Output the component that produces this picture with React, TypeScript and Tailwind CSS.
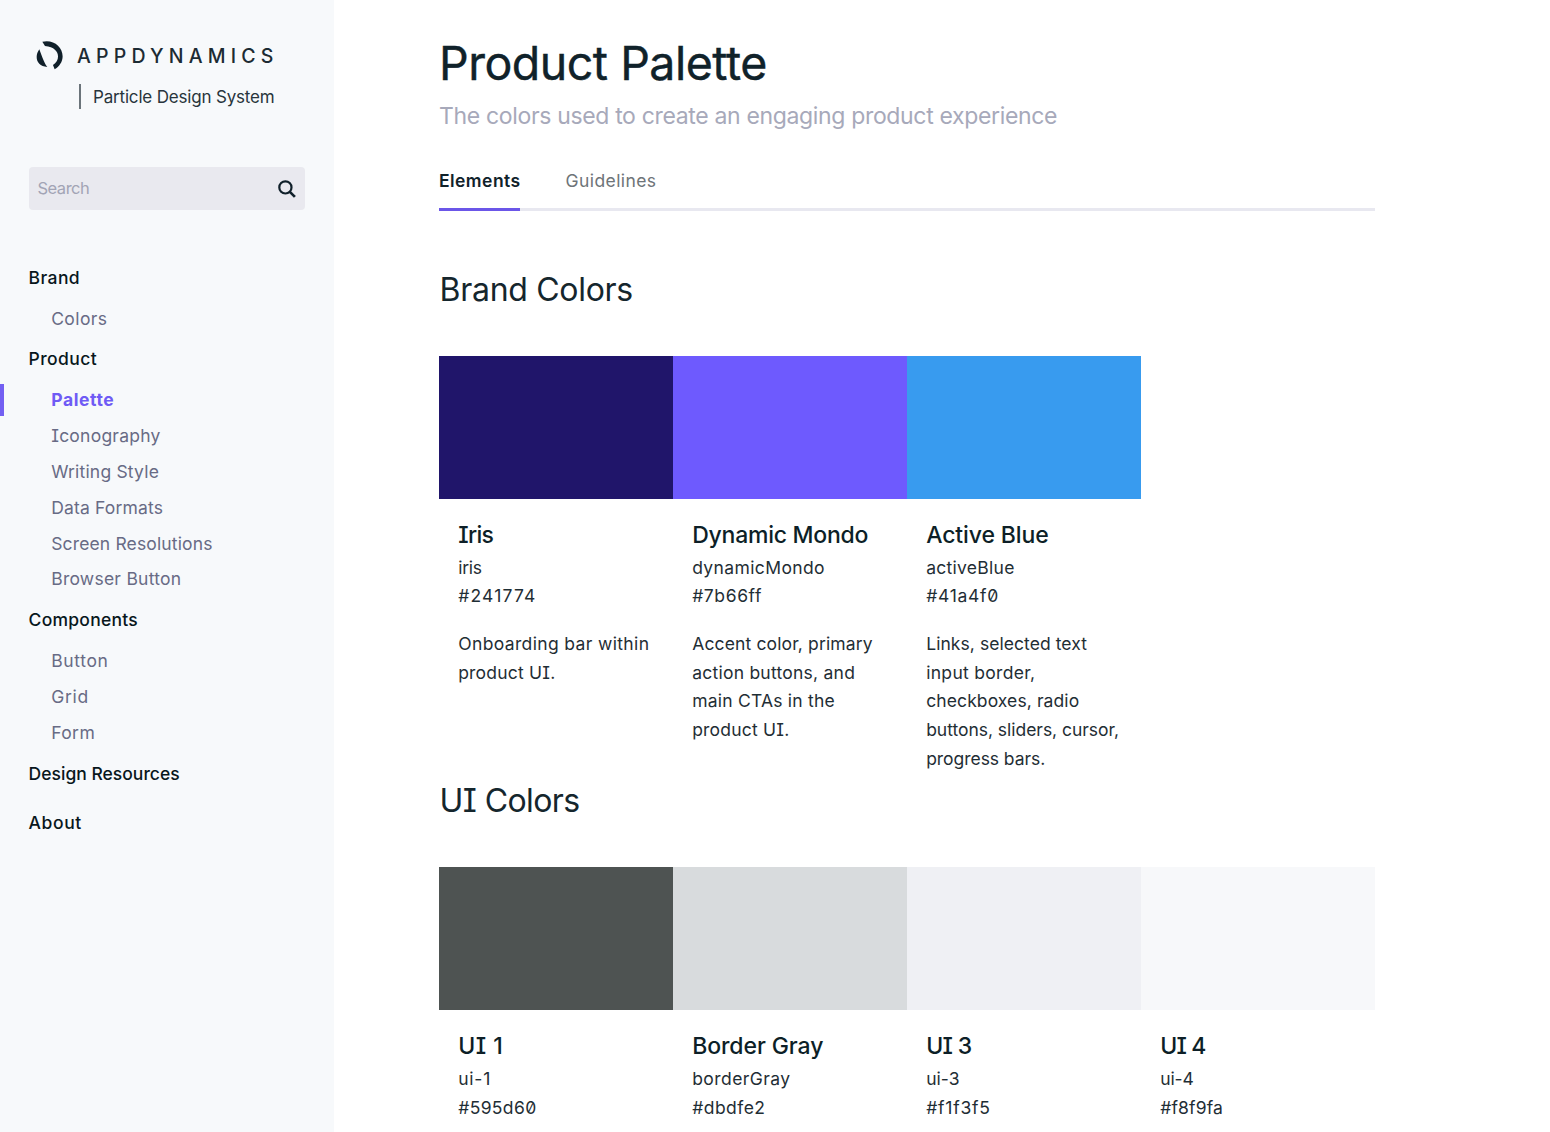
type NavLink = { label: string; tracking: string; active?: boolean };
type NavGroup = { label: string; tracking: string; links: NavLink[] };

const nav: NavGroup[] = [
  {
    label: "Brand",
    tracking: "tracking-[0.4px]",
    links: [{ label: "Colors", tracking: "tracking-[0.4px]" }],
  },
  {
    label: "Product",
    tracking: "tracking-[0.4px]",
    links: [
      { label: "Palette", tracking: "tracking-[0.6px]", active: true },
      { label: "Iconography", tracking: "tracking-[0.23px]" },
      { label: "Writing Style", tracking: "tracking-[0.19px]" },
      { label: "Data Formats", tracking: "tracking-[0.16px]" },
      { label: "Screen Resolutions", tracking: "tracking-[0.15px]" },
      { label: "Browser Button", tracking: "tracking-[0.25px]" },
    ],
  },
  {
    label: "Components",
    tracking: "tracking-[0.25px]",
    links: [
      { label: "Button", tracking: "tracking-[0.65px]" },
      { label: "Grid", tracking: "tracking-[0.7px]" },
      { label: "Form", tracking: "tracking-[0.4px]" },
    ],
  },
  { label: "Design Resources", tracking: "tracking-[0.01px]", links: [] },
  { label: "About", tracking: "tracking-[0.6px]", links: [] },
];

type Swatch = {
  name: string;
  nameTracking: string;
  token: string;
  tokenTracking: string;
  hex: string;
  hexTracking: string;
  fill: string;
  lines?: { text: string; tracking: string }[];
};

const brandColors: Swatch[] = [
  {
    name: "Iris",
    nameTracking: "tracking-[-0.7px]",
    token: "iris",
    tokenTracking: "tracking-[-0.3px]",
    hex: "#241774",
    hexTracking: "tracking-[1.2px]",
    fill: "bg-[#20156a]",
    lines: [
      { text: "Onboarding bar within", tracking: "tracking-[0.36px]" },
      { text: "product UI.", tracking: "tracking-[0.2px]" },
    ],
  },
  {
    name: "Dynamic Mondo",
    nameTracking: "tracking-[-0.24px]",
    token: "dynamicMondo",
    tokenTracking: "tracking-[0.38px]",
    hex: "#7b66ff",
    hexTracking: "tracking-[0.6px]",
    fill: "bg-[#6e5afe]",
    lines: [
      { text: "Accent color, primary", tracking: "tracking-[0.14px]" },
      { text: "action buttons, and", tracking: "tracking-[0.24px]" },
      { text: "main CTAs in the", tracking: "tracking-[0.22px]" },
      { text: "product UI.", tracking: "tracking-[0.2px]" },
    ],
  },
  {
    name: "Active Blue",
    nameTracking: "tracking-[-0.12px]",
    token: "activeBlue",
    tokenTracking: "tracking-[0.27px]",
    hex: "#41a4f0",
    hexTracking: "tracking-[0.7px]",
    fill: "bg-[#389bef]",
    lines: [
      { text: "Links, selected text", tracking: "tracking-[0.06px]" },
      { text: "input border,", tracking: "tracking-[0.3px]" },
      { text: "checkboxes, radio", tracking: "tracking-[0.1px]" },
      { text: "buttons, sliders, cursor,", tracking: "tracking-[-0.03px]" },
      { text: "progress bars.", tracking: "tracking-[-0.05px]" },
    ],
  },
];

const uiColors: Swatch[] = [
  {
    name: "UI 1",
    nameTracking: "tracking-[0.5px]",
    token: "ui-1",
    tokenTracking: "tracking-[0.8px]",
    hex: "#595d60",
    hexTracking: "tracking-[0.36px]",
    fill: "bg-[#4e5352]",
  },
  {
    name: "Border Gray",
    nameTracking: "tracking-[-0.09px]",
    token: "borderGray",
    tokenTracking: "tracking-[0.44px]",
    hex: "#dbdfe2",
    hexTracking: "tracking-[0.45px]",
    fill: "bg-[#d8dbdd]",
  },
  {
    name: "UI 3",
    nameTracking: "tracking-[-0.7px]",
    token: "ui-3",
    tokenTracking: "tracking-[0px]",
    hex: "#f1f3f5",
    hexTracking: "tracking-[0.78px]",
    fill: "bg-[#eff0f4]",
  },
  {
    name: "UI 4",
    nameTracking: "tracking-[-0.8px]",
    token: "ui-4",
    tokenTracking: "tracking-[-0.1px]",
    hex: "#f8f9fa",
    hexTracking: "tracking-[0.16px]",
    fill: "bg-[#f7f8fa]",
  },
];

function LogoMark() {
  return (
    <svg viewBox="20 18 88 90" className="h-[30px] w-[29.3px] shrink-0" fill="#10202a">
      <path d="M42 23 C75 15 103 38 103 67 C103 84 93 98 79 106 L74 93 C98 78 96 40 50 36 Z" />
      <path d="M33 46 C17 68 25 98 57 99 C50 92 41 68 33 46 Z" />
    </svg>
  );
}

function SearchIcon() {
  return (
    <svg viewBox="0 0 18 18" className="h-[18px] w-[18px]" fill="none" stroke="#10202a">
      <circle cx="7.4" cy="7.4" r="6.1" strokeWidth="2.2" />
      <path d="M11.6 11.6 L16.9 16.9" strokeWidth="2.7" />
    </svg>
  );
}

function Sidebar() {
  return (
    <aside className="flex w-[334px] shrink-0 flex-col bg-[#f7f9fb]">
      <div className="ml-[34.7px] mt-10 flex h-[30px] items-center">
        <LogoMark />
        <span className="ml-[13px] mt-[3px] text-[19.5px] font-medium leading-none tracking-[5.2px] text-[#1c2b33] [font-feature-settings:normal]">
          APPDYNAMICS
        </span>
      </div>
      <div className="ml-[79px] mt-[14px] flex h-[25px] items-center border-l-2 border-[#6b747a] pl-3">
        <span className="mt-0.5 whitespace-nowrap text-[17px] leading-none tracking-[-0.18px] text-[#28353c]">
          Particle Design System
        </span>
      </div>
      <div className="ml-[28.5px] mt-[58px] flex h-[43px] w-[276.5px] items-center justify-between rounded-sm bg-[#e9e9ef] pl-[9px] pr-[9.5px]">
        <span className="text-[16.5px] tracking-[-0.5px] text-[#a2a4b5]">Search</span>
        <SearchIcon />
      </div>
      <nav className="mt-[44.8px] text-[17.5px]">
        {nav.map((group) => (
          <div key={group.label} className="last:mt-[3.7px]">
            <div className="flex h-[46px] items-center pl-[28.6px] font-medium text-[#08171c]">
              <span className={group.tracking}>{group.label}</span>
            </div>
            {group.links.map((link) => (
              <div key={link.label} className="flex h-[35.8px] items-center">
                <span className={link.active ? "h-8 w-1 bg-[#7360f2]" : "h-8 w-1"} />
                <span
                  className={`ml-[47.2px] ${link.tracking} ${
                    link.active ? "font-bold text-[#6f5bf5]" : "text-[#686b85]"
                  }`}
                >
                  {link.label}
                </span>
              </div>
            ))}
          </div>
        ))}
      </nav>
    </aside>
  );
}

function SwatchCard({ swatch }: { swatch: Swatch }) {
  return (
    <div className="w-[234px] whitespace-nowrap">
      <div className={`h-[143px] ${swatch.fill}`} />
      <div className="pl-[19.2px] text-[17.5px] leading-[28.65px] text-[#1f2e35]">
        <h3 className="mt-[21px] h-[30px] text-[23px] font-medium leading-[30px] text-[#0d1f27]">
          <span className={swatch.nameTracking}>{swatch.name}</span>
        </h3>
        <p className="mt-[3.8px]">
          <span className={swatch.tokenTracking}>{swatch.token}</span>
        </p>
        <p>
          <span className={swatch.hexTracking}>{swatch.hex}</span>
        </p>
        {swatch.lines && (
          <div className="mt-[19px]">
            {swatch.lines.map((line) => (
              <p key={line.text}>
                <span className={line.tracking}>{line.text}</span>
              </p>
            ))}
          </div>
        )}
      </div>
    </div>
  );
}

function Section({ title, tracking, swatches }: { title: string; tracking: string; swatches: Swatch[] }) {
  return (
    <section>
      <h2 className={`pl-[0.6px] text-[32px] leading-10 text-[#15262d] ${tracking}`}>{title}</h2>
      <div className="mt-[46.2px] flex">
        {swatches.map((swatch) => (
          <SwatchCard key={swatch.name} swatch={swatch} />
        ))}
      </div>
    </section>
  );
}

export default function App() {
  return (
    <div className="flex h-[1132px] w-[1550px] overflow-hidden bg-white font-['Inter',sans-serif] [font-feature-settings:'cv08','zero']">
      <Sidebar />
      <main className="ml-[105px] w-[936px]">
        <h1 className="mt-[32.5px] text-[46.5px] font-normal leading-[60px] tracking-[-0.5px] text-[#10222a] [-webkit-text-stroke:0.4px_#10222a]">
          Product Palette
        </h1>
        <p className="mt-[3.5px] whitespace-nowrap text-[23px] leading-10 tracking-[-0.34px] text-[#a7a9ba]">
          The colors used to create an engaging product experience
        </p>
        <div className="mt-[24px] flex h-[51px] gap-[45.5px] border-b-[3px] border-[#e8e8f0] text-[17.5px] leading-[42px]">
          <span className="-mb-[3px] w-[81px] border-b-[3px] border-[#6b56e8] font-semibold tracking-[0.45px] text-[#10222a]">
            Elements
          </span>
          <span className="tracking-[0.42px] text-[#6e7478]">Guidelines</span>
        </div>
        <div className="mt-[58.8px] flex flex-col gap-[7.9px]">
          <Section title="Brand Colors" tracking="tracking-[-0.3px]" swatches={brandColors} />
          <Section title="UI Colors" tracking="tracking-[-0.6px]" swatches={uiColors} />
        </div>
      </main>
    </div>
  );
}
